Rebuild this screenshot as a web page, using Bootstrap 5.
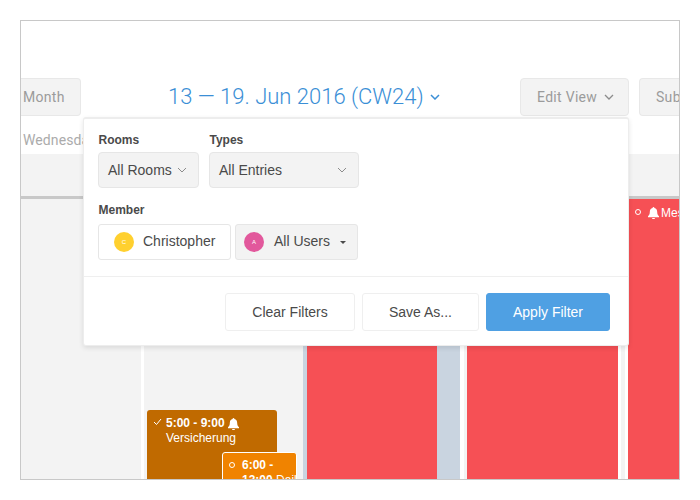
<!DOCTYPE html>
<html lang="en"><head><meta charset="utf-8"><title>Calendar</title>
<link href="https://cdn.jsdelivr.net/npm/bootstrap@5.3.0/dist/css/bootstrap.min.css" rel="stylesheet">
<style>
html,body{margin:0;height:500px;background:#fff;overflow:hidden}
body{font-family:"Liberation Sans",Arial,sans-serif;color:#4a4a4a;font-size:14px}
.frame{position:relative;margin:20px;width:660px;height:460px;border:1px solid #c8c8c8;overflow:hidden;background:#fff}
.toolbar{height:95px;padding-top:57px;flex:none;font-family:Roboto,sans-serif}
.tool{height:38px;background:#f3f3f3;border:1px solid #e8e8e8;border-radius:4px;color:#9b9b9b;font-size:14px;flex:none;line-height:36px;letter-spacing:.3px}
.t-month{width:60px;padding-left:2px;border-left:0;border-radius:0 4px 4px 0}
.t-edit{width:109px;padding-left:16px;gap:7px}
.t-sub{width:60px;margin-left:10px;padding-left:16px;border-right:0;border-radius:4px 0 0 4px}
.range{width:439px;flex:none;color:#3b8fd6;font-size:22px;font-weight:300;gap:6px;height:38px;line-height:36px;padding-left:87px}
.dayrow{height:38px;color:#ababab;padding:12px 0 0 2px;line-height:24px;flex:none;font-family:Roboto,sans-serif;letter-spacing:.1px}
.headband{height:45px;background:#f3f3f3;flex:none;border-bottom:3px solid #c8c8c8}
.cal{flex:1;position:relative;min-height:0;background:#fff;align-items:stretch}
.cl{flex:none;height:100%}
.g1{width:120px;background:#f3f3f3}.w3{width:3px;background:#fff}.g2{width:159px;background:#f3f3f3}
.s4{width:4px;background:#c9d4e0}.r1{width:130px;background:#f65055}.s23{width:23px;background:#c9d4e0}
.w4{width:4px;background:#fff}.g3{width:3px;background:#f3f3f3}.g4{width:4px;background:#f3f3f3}.r2{width:151px;background:#f65055}
.r3{flex:1;background:#f65055;color:#fff;font-size:12px;padding:6px 0 0 7px;white-space:nowrap;overflow:hidden;line-height:16px}
.ic{flex:none;margin:2px 2px 0 7px}
.entry{position:absolute;color:#fff;font-size:12px;line-height:15px;border-radius:3px;overflow:hidden;white-space:nowrap}
.e1{left:126px;top:211px;width:130px;height:100px;background:#c06a00;padding:6px 6px 0 19px}
.e2{left:201px;top:253px;width:75px;height:60px;background:#f08300;border:1px solid #fff;padding:5px 4px 0 19px}
.mk{position:absolute;left:6px;top:8px}
.e2 .mk{left:6px;top:9px}
.rb{width:6px;height:6px;border:1px solid #fff;border-radius:50%;flex:none}
.pop{position:absolute;left:62px;top:96px;width:546px;height:229px;background:#fff;border:1px solid #ededed;border-top-width:2px;border-radius:3px;box-shadow:0 2px 5px rgba(0,0,0,.1);z-index:5}
.pop-body{padding:13px 14px 0;height:157px}
.lab{font-size:12px;font-weight:700;line-height:16px;margin-bottom:4px;padding-left:.5px;color:#4a4a4a}
.lab-m{margin-top:14px;margin-bottom:6px}
.sel{height:36px;background:#f3f3f3;border:1px solid #e6e6e6;border-radius:4px;font-size:14px;padding:0 11px 0 9px;color:#4a4a4a}
.s-a{width:101px}.s-b{width:150px}
.cg{gap:10px}
.mem{height:36px;border:1px solid #e6e6e6;border-radius:3px;font-size:14px;color:#4a4a4a}
.mem-t{margin-bottom:2px}
.m1{width:133px;background:#fff;padding-left:15px;gap:9px}
.m2{width:123px;background:#f3f3f3;padding-left:8px;gap:10px;margin-left:4px}
.av{width:20px;height:20px;border-radius:50%;color:#fff;font-size:6px;flex:none}
.ay{background:#ffd02f}.ap{background:#e2589c}
.caret-s{width:0;height:0;border-left:3px solid transparent;border-right:3px solid transparent;border-top:3px solid #4a4a4a}
.pop-foot{border-top:1px solid #efefef;padding:16px 18px 0 0;gap:7px}
.fbtn{height:38px;font-size:14px;background:#fff;border:1px solid #efefef;border-radius:3px;color:#4a4a4a;padding:0}
.b1{width:130px}.b2{width:117px}
.b3{width:124px;background:#4fa0e3;border-color:#4fa0e3;color:#fff}
.b3:hover{background:#4fa0e3;color:#fff}
</style></head><body>
<div class="frame d-flex flex-column">
  <div class="toolbar d-flex align-items-start">
    <div class="tool t-month">Month</div>
    <div class="range d-flex align-items-center">13 — 19. Jun 2016 (CW24)
      <svg width="10" height="6" viewBox="0 0 10 6"><path d="M1 1l4 4 4-4" fill="none" stroke="#3b8fd6" stroke-width="1.5"/></svg></div>
    <div class="tool t-edit d-flex align-items-center">Edit View
      <svg width="10" height="6" viewBox="0 0 10 6"><path d="M1 1l4 4 4-4" fill="none" stroke="#8c8c8c" stroke-width="1.3"/></svg></div>
    <div class="tool t-sub">Sub</div>
  </div>
  <div class="dayrow">Wednesday</div>
  <div class="headband"></div>
  <div class="cal d-flex">
    <div class="cl g1"></div><div class="cl w3"></div><div class="cl g2"></div><div class="cl s4"></div>
    <div class="cl r1"></div><div class="cl s23"></div><div class="cl w4"></div><div class="cl g3"></div>
    <div class="cl r2"></div><div class="cl w3"></div><div class="cl g4"></div><div class="cl w3"></div>
    <div class="cl r3 d-flex align-items-start"><span class="rb mt-1"></span><svg class="ic" width="11" height="12" viewBox="0 0 12 13"><path d="M6 0a1 1 0 0 1 1 1c2 .5 3 2 3 4 0 3 1 4 2 5v1H0v-1c1-1 2-2 2-5 0-2 1-3.500 3-4a1 1 0 0 1 1-1zM4.500 12h3a1.500 1.500 0 0 1-3 0z" fill="#fff"/></svg><span>Mes</span></div>
    <div class="entry e1"><svg class="mk" width="9" height="8" viewBox="0 0 9 8"><path d="M1 4l2.500 2.500L8 1" fill="none" stroke="#fff" stroke-width="1"/></svg><b>5:00 - 9:00</b> <svg width="11" height="12" viewBox="0 0 12 13"><path d="M6 0a1 1 0 0 1 1 1c2 .5 3 2 3 4 0 3 1 4 2 5v1H0v-1c1-1 2-2 2-5 0-2 1-3.500 3-4a1 1 0 0 1 1-1zM4.500 12h3a1.500 1.500 0 0 1-3 0z" fill="#fff"/></svg><br>Versicherung</div>
    <div class="entry e2"><span class="rb mk d-block"></span><b>6:00 -<br>13:00</b> Daily</div>
  </div>
  <div class="pop">
    <div class="pop-body">
      <div class="d-flex cg">
        <div><div class="lab">Rooms</div><div class="sel s-a d-flex align-items-center justify-content-between">All Rooms <svg width="10" height="6" viewBox="0 0 10 6"><path d="M1 1l4 4 4-4" fill="none" stroke="#8c8c8c" stroke-width="1"/></svg></div></div>
        <div><div class="lab">Types</div><div class="sel s-b d-flex align-items-center justify-content-between">All Entries <svg width="10" height="6" viewBox="0 0 10 6"><path d="M1 1l4 4 4-4" fill="none" stroke="#8c8c8c" stroke-width="1"/></svg></div></div>
      </div>
      <div class="lab lab-m">Member</div>
      <div class="d-flex">
        <div class="mem m1 d-flex align-items-center"><span class="av ay d-flex align-items-center justify-content-center">C</span><span class="mem-t">Christopher</span></div>
        <div class="mem m2 d-flex align-items-center"><span class="av ap d-flex align-items-center justify-content-center">A</span><span class="mem-t">All Users</span><span class="caret-s"></span></div>
      </div>
    </div>
    <div class="pop-foot d-flex justify-content-end">
      <button class="btn fbtn b1">Clear Filters</button>
      <button class="btn fbtn b2">Save As...</button>
      <button class="btn fbtn b3">Apply Filter</button>
    </div>
  </div>
</div>
</body></html>
